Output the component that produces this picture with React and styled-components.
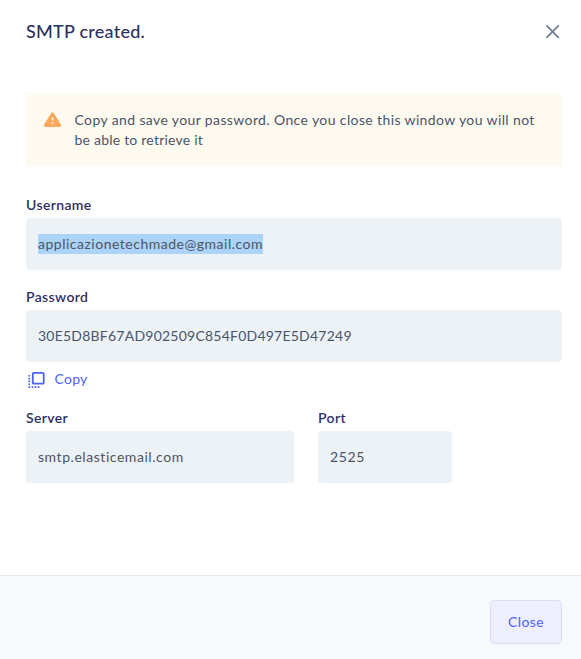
import React from 'react';
import styled, { createGlobalStyle } from 'styled-components';

const GlobalStyle = createGlobalStyle`
  *, *::before, *::after { box-sizing: border-box; }
  body {
    margin: 0;
    background: #fff;
    color: #4a5568;
    font: 400 14px/20px Lato, "Open Sans", sans-serif;
  }
`;

const Dialog = styled.section`
  display: flex;
  flex-direction: column;
  height: 659px;
  overflow: hidden;
`;

const Header = styled.header`
  display: flex;
  align-items: center;
  justify-content: space-between;
  height: 62px;
  padding: 0 19px 0 26px;
`;

const Title = styled.h1`
  margin: 0 0 1px;
  color: #2d3162;
  font-size: 18px;
  font-weight: 500;
  line-height: 24px;
  letter-spacing: 0.25px;
`;

const IconButton = styled.button`
  display: flex;
  padding: 0;
  border: 0;
  background: none;
  color: #718096;
`;

const Body = styled.main`
  display: flex;
  flex: 1;
  flex-direction: column;
  padding: 32px 19px 0 26px;
`;

const Notice = styled.div`
  display: flex;
  gap: 12.5px;
  height: 72px;
  padding: 16px 20px 0 17px;
  margin-bottom: 29px;
  border-radius: 4px;
  background: #fffaf0;

  svg { flex: none; margin-top: 2px; }
`;

const NoticeText = styled.p`
  margin: 0;
  white-space: nowrap;
`;

const NoticeLine = styled.span`
  display: block;
  letter-spacing: ${({ $spacing }) => $spacing}px;
`;

const FieldGroup = styled.div`
  width: ${({ $width }) => $width || '100%'};
  margin-bottom: ${({ $gap }) => $gap || 0}px;
`;

const Label = styled.div`
  height: 23px;
  color: #2d3162;
  font-weight: 600;
  line-height: 20px;
  letter-spacing: 0.37px;
`;

const Value = styled.div`
  display: flex;
  align-items: center;
  height: 52px;
  padding: 0 12px;
  border-radius: 4px;
  background: #edf2f7;
  letter-spacing: ${({ $spacing }) => $spacing}px;
`;

const Selected = styled.mark`
  background: #acd3f9;
  color: inherit;
  line-height: 20px;
`;

const CopyButton = styled.button`
  display: flex;
  align-self: flex-start;
  align-items: center;
  gap: 8.5px;
  height: 20px;
  margin: 7px 0 19px;
  padding: 0 0 0 2px;
  border: 0;
  background: none;
  color: #4c63f2;
  font: inherit;
  letter-spacing: 0.25px;

  svg { margin-top: 2px; }
`;

const FieldRow = styled.div`
  display: flex;
  gap: 24px;
`;

const Footer = styled.footer`
  display: flex;
  justify-content: flex-end;
  height: 84px;
  padding: 24px 19px 0 0;
  border-top: 1px solid #e2e8f0;
  background: #f7fafc;
`;

const CloseButton = styled.button`
  width: 72px;
  height: 44px;
  padding: 0;
  border: 1px solid #dcdcf5;
  border-radius: 4px;
  background: #eeeeff;
  color: #4c63f2;
  font: inherit;
  letter-spacing: 0.4px;
`;

const CrossIcon = () => (
  <svg width="18" height="18" viewBox="0 0 18 18" fill="none" stroke="currentColor" strokeWidth="1.8">
    <path d="M2.4 3.4 14.8 15.8M14.8 3.4 2.4 15.8" />
  </svg>
);

const WarningIcon = () => (
  <svg width="19" height="18" viewBox="0 0 19 18">
    <path d="M7.6 1.9Q9.5-.7 11.4 1.9L17.6 12Q19 14.7 16.2 14.9H2.8Q0 14.7 1.4 12Z" fill="#fbaa5c" />
    <path d="M9.5 5.2v3.1M9.5 9.9v1.9" stroke="#fff5e5" strokeWidth="1.6" />
  </svg>
);

const CopyIcon = () => (
  <svg width="18" height="18" viewBox="0 0 18 18" fill="none" stroke="currentColor">
    <rect x="4.8" y="1.8" width="10.9" height="10.9" rx="1" strokeWidth="1.8" />
    <path
      d="M.4 4.8h1.7M.4 7.6h1.7M.4 10.4h1.7M.4 13.2h1.7M.4 16.1h1.7M3.6 16.1h1.7M6.7 16.1h1.7M9.8 16.1h1.7"
      strokeWidth="1.6"
    />
  </svg>
);

const Field = ({ label, spacing, width, gap, children }) => (
  <FieldGroup $width={width} $gap={gap}>
    <Label>{label}</Label>
    <Value $spacing={spacing}>{children}</Value>
  </FieldGroup>
);

export default function App() {
  return (
    <>
      <GlobalStyle />
      <Dialog>
        <Header>
          <Title>SMTP created.</Title>
          <IconButton aria-label="Close dialog"><CrossIcon /></IconButton>
        </Header>
        <Body>
          <Notice>
            <WarningIcon />
            <NoticeText>
              <NoticeLine $spacing={0.38}>Copy and save your password. Once you close this window you will not</NoticeLine>
              <NoticeLine $spacing={0.22}>be able to retrieve it</NoticeLine>
            </NoticeText>
          </Notice>
          <Field label="Username" spacing={0.51} gap={17}>
            <Selected>applicazionetechmade@gmail.com</Selected>
          </Field>
          <Field label="Password" spacing={0.23}>30E5D8BF67AD902509C854F0D497E5D47249</Field>
          <CopyButton><CopyIcon />Copy</CopyButton>
          <FieldRow>
            <Field label="Server" spacing={0.55} width="268px">smtp.elasticemail.com</Field>
            <Field label="Port" spacing={0.6} width="134px">2525</Field>
          </FieldRow>
        </Body>
        <Footer>
          <CloseButton>Close</CloseButton>
        </Footer>
      </Dialog>
    </>
  );
}
